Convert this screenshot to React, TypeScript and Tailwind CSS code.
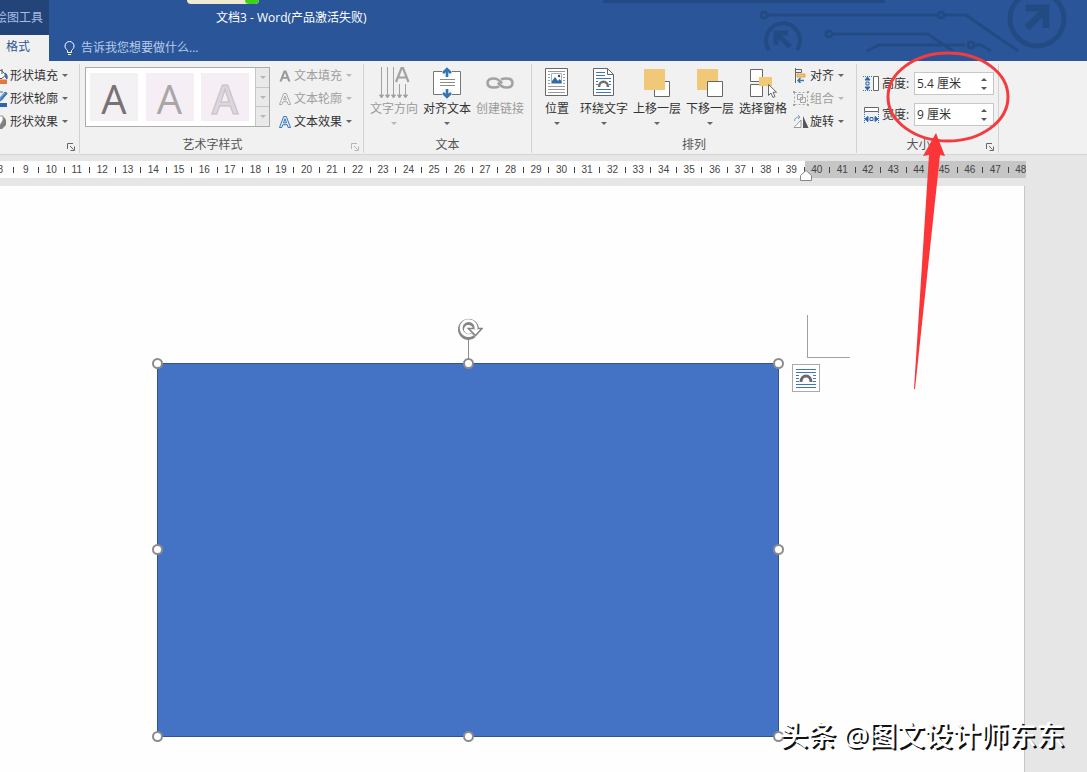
import React from 'react';
import clsx from 'clsx';

const RULER = Array.from({ length: 41 }, (_, i) => i + 8);

const Caret: React.FC<{ dim?: boolean }> = ({ dim }) => (
  <svg width="6" height="3" viewBox="0 0 6 3" className={clsx('shrink-0', dim ? 'fill-[#b8b8b8]' : 'fill-[#666]')}>
    <path d="M0 0h6L3 3z" />
  </svg>
);

const Launcher: React.FC<{ dim?: boolean; label: string }> = ({ dim, label }) => (
  <button aria-label={label} className={clsx('absolute bottom-0.5 right-1', dim ? 'text-[#b5b5b5]' : 'text-[#666]')}>
    <svg width="8" height="8" viewBox="0 0 8 8" fill="none" stroke="currentColor">
      <path d="M.5 6V.5H6M3 3l3.500 3.500M7.500 3.500v4h-4" />
    </svg>
  </button>
);

interface GroupProps {
  label: string;
  launcher?: 'on' | 'dim';
  className?: string;
  children: React.ReactNode;
}

const Group: React.FC<GroupProps> = ({ label, launcher, className, children }) => (
  <section className={clsx('relative flex h-[89px] shrink-0 flex-col border-r border-[#d2d2d2]', className)}>
    <div className="flex flex-1">{children}</div>
    <div className={clsx('h-4 text-center text-[#555]', launcher && 'pr-[18px]')}>{label}</div>
    {launcher && <Launcher dim={launcher === 'dim'} label="更多选项" />}
  </section>
);

interface ItemProps {
  icon: React.ReactNode;
  text: string;
  dim?: boolean;
  caret?: boolean;
  narrow?: boolean;
}

const SmallItem: React.FC<ItemProps> = ({ icon, text, dim }) => (
  <button className={clsx('flex h-[23px] items-center gap-px whitespace-nowrap', dim ? 'text-[#a0a0a0]' : 'text-[#333]')}>
    <span className="flex w-4 shrink-0 justify-center">{icon}</span>
    <span>{text}</span>
    <span className="ml-[3px]">
      <Caret dim={dim} />
    </span>
  </button>
);

const BigItem: React.FC<ItemProps> = ({ icon, text, dim, caret = true, narrow }) => (
  <button
    className={clsx(
      'flex flex-col items-center self-start whitespace-nowrap',
      narrow ? 'w-9' : 'w-12',
      dim ? 'text-[#9a9a9a]' : 'text-[#333]'
    )}
  >
    <span className="flex h-[37px] items-center justify-center">{icon}</span>
    <span>{text}</span>
    {caret && (
      <span className="mt-[5px]">
        <Caret dim={dim} />
      </span>
    )}
  </button>
);

const FillIcon = () => (
  <svg width="16" height="16" viewBox="0 0 16 16" fill="none">
    <path d="M3 6l5-4 5 5-5 4z" fill="#fff" stroke="#555" />
    <path d="M9 1v5" stroke="#555" />
    <path d="M12 5c2 1 2.500 3 2 6-1.500-1-2-3-2-6z" fill="#2e6ca8" stroke="#2e6ca8" />
    <path d="M0 11.500h14V16H0z" fill="#e8763a" />
  </svg>
);

const OutlineIcon = () => (
  <svg width="16" height="16" viewBox="0 0 16 16" fill="none">
    <path d="M1 1h9M5 11l1-3 6-7 2 1.500-6 7z" stroke="#3b78b8" />
    <path d="M6 9l7-8 1.500 1.500-6 7z" fill="#3b78b8" />
    <path d="M0 12h14v4H0z" fill="#2b64b5" />
  </svg>
);

const EffectIcon = () => (
  <svg width="16" height="16" viewBox="0 0 16 16">
    <path d="M5 3h6l2 3v5l-4 4H4z" fill="#808080" />
    <path d="M1 2h9v4l-4 7H1z" fill="#fff" stroke="#999" />
  </svg>
);

const GlyphA: React.FC<{ className: string }> = ({ className }) => (
  <svg width="14" height="14" viewBox="0 0 14 14" className={className}>
    <path d="M1.500 12.500L5.700 1.500h2.600l4.200 11h-2.300l-1-2.800H4.800l-1 2.800zM5.500 7.900h3L7 3.700z" />
  </svg>
);

const DirectionIcon = () => (
  <svg width="32" height="34" viewBox="0 0 32 34" fill="none" stroke="#a2a2a2">
    <path d="M3.500 1v30M9.500 1v30M15.500 1v30M21.500 18v13M27.500 18v13" />
    <path d="M1.500 29l2 3 2-3zM7.500 29l2 3 2-3zM13.500 29l2 3 2-3zM19.500 29l2 3 2-3zM25.500 29l2 3 2-3z" fill="#a2a2a2" />
    <path d="M18 16L23.500 2h1.500L30.500 16M20 11.500h8.500" strokeWidth="2.200" />
  </svg>
);

const AlignTextIcon = () => (
  <svg width="30" height="32" viewBox="0 0 30 32" fill="none">
    <path d="M1.500 4.500h27v23h-27z" fill="#fff" stroke="#777" />
    <path d="M10 0h10v9H10zM10 22h10v10H10z" fill="#f6f6f6" />
    <path d="M8 12.500h15M8 15.500h15M8 18.500h15" stroke="#8a8a8a" />
    <path d="M15 10V3M11 6l4-4 4 4M15 22v7M11 26l4 4 4-4" stroke="#3574b5" strokeWidth="2.600" />
  </svg>
);

const LinkIcon = () => (
  <svg width="28" height="14" viewBox="0 0 28 14" fill="none" stroke="#a2a2a2" strokeWidth="2.600">
    <path d="M13 10.500c-1.500.800-3 1-5.500 1C4 11.500 1.500 10 1.500 7S4 2.500 7.500 2.500c4 0 6.500 2 8.500 5" />
    <path d="M15 3.500c1.500-.800 3-1 5.500-1 3.500 0 6 1.500 6 4.500s-2.500 4.500-6 4.500c-4 0-6.500-2-8.500-5" />
  </svg>
);

const PositionIcon = () => (
  <svg width="24" height="29" viewBox="0 0 24 29" fill="none">
    <path d="M.5.500h22v27H.500z" fill="#fff" stroke="#666" />
    <path d="M3 3.500h17M3 6.500h2M18 6.500h2M3 9.500h2M18 9.500h2M3 12.500h2M18 12.500h2M3 15.500h2M18 15.500h2M3 18.500h17M3 21.500h17M3 24.500h17" stroke="#9a9a9a" />
    <path d="M6.500 5.500h10v10h-10z" fill="#fff" stroke="#9fb5cc" />
    <path d="M7 15v-2l3-4 3 4 1.500-2 2 2v2z" fill="#2f6da8" />
    <circle cx="14" cy="8" r="1.200" fill="#444" />
  </svg>
);

const WrapIcon = () => (
  <svg width="22" height="29" viewBox="0 0 22 29" fill="none">
    <path d="M.5.500h14l6 6v21H.500z" fill="#fff" stroke="#666" />
    <path d="M14.500.500v6h6" stroke="#666" />
    <path d="M3 4.500h9M3 7.500h9M3 10.500h15M3 13.500h2M16 13.500h2M3 16.500h2M16 16.500h2M3 21.500h15M3 24.500h15" stroke="#3f77b6" />
    <path d="M6 19c0-7 9-7 9 0" stroke="#707070" strokeWidth="2.600" />
  </svg>
);

const ForwardIcon = () => (
  <svg width="28" height="30" viewBox="0 0 28 30">
    <path d="M11.500 13.500h15v15h-15z" fill="#fff" stroke="#666" />
    <path d="M1 1h21v21H1z" fill="#f0c878" />
  </svg>
);

const BackwardIcon = () => (
  <svg width="28" height="30" viewBox="0 0 28 30">
    <path d="M1 1h21v21H1z" fill="#f0c878" />
    <path d="M11.500 13.500h15v15h-15z" fill="#fff" stroke="#666" />
  </svg>
);

const PaneIcon = () => (
  <svg width="28" height="30" viewBox="0 0 28 30">
    <path d="M1.500 1.500h12v12h-12zM1.500 16.500h12v12h-12z" fill="#fff" stroke="#666" />
    <path d="M10 9h13v9H10z" fill="#f0c878" />
    <path d="M19.500 16.500v11l2.500-2.500 2 4.500 2-1-2-4.300h3.500z" fill="#fff" stroke="#666" />
  </svg>
);

const AlignIcon = () => (
  <svg width="14" height="15" viewBox="0 0 14 15" fill="none">
    <path d="M1.500 0v15M1.500 1.500h6v3h-6" stroke="#666" />
    <path d="M3 6h8v3H3z" fill="#f3c376" stroke="#dfa64f" />
    <path d="M4 12.500h6M6.500 10L4 12.500 6.500 15" stroke="#3574b5" strokeWidth="1.500" />
  </svg>
);

const CombineIcon = () => (
  <svg width="16" height="15" viewBox="0 0 16 15" fill="none" stroke="#a5a5a5">
    <path d="M1.500 1.500h13v12h-13z" strokeDasharray="2 2" />
    <path d="M4.500 3.500h5v5h-5zM7.500 6.500h5v5h-5z" />
    <path d="M0 0h2v2H0zM14 0h2v2h-2zM0 13h2v2H0zM14 13h2v2h-2z" fill="#a5a5a5" stroke="none" />
  </svg>
);

const RotateIcon = () => (
  <svg width="16" height="14" viewBox="0 0 16 14" fill="none">
    <path d="M1 12.500h7V5z" fill="#fff" stroke="#999" />
    <path d="M10 1l5.500 12H10z" fill="#555" />
    <path d="M1.500 6c0-3 2-4 5-4M5 0l2 2-2 2" stroke="#7c9cc4" />
  </svg>
);

const HeightIcon = () => (
  <svg width="17" height="17" viewBox="0 0 17 17" fill="none">
    <path d="M10.500 1.500h5v14h-5z" fill="#fff" stroke="#666" />
    <path d="M0 1.500h10M0 15.500h10" stroke="#3574b5" strokeDasharray="1 1" />
    <path d="M4.500 2L2 5h5zM4.500 15L2 12h5z" fill="#2b64a8" stroke="#2b64a8" />
    <path d="M3 7h3v3H3z" stroke="#2b64a8" />
  </svg>
);

const WidthIcon = () => (
  <svg width="17" height="17" viewBox="0 0 17 17" fill="none">
    <path d="M1.500 1.500h14v4h-14z" fill="#fff" stroke="#666" />
    <path d="M1.500 6v11M15.500 6v11" stroke="#3574b5" strokeDasharray="1 1" />
    <path d="M2 13l3-2.500v5zM15 13l-3-2.500v5z" fill="#2b64a8" stroke="#2b64a8" />
    <path d="M7 11.500h3v3H7z" stroke="#2b64a8" />
  </svg>
);

const LayoutIcon = () => (
  <svg width="20" height="20" viewBox="0 0 20 20" fill="none">
    <path d="M0 1.500h20M0 4.500h20M0 7.500h3M17 7.500h3M0 10.500h3M17 10.500h3M0 13.500h3M17 13.500h3M0 16.500h20M0 19.500h20" stroke="#3f77b6" />
    <path d="M5 14c0-8 10-8 10 0" stroke="#6a6a6a" strokeWidth="3" />
  </svg>
);

const Circuit = () => (
  <svg width="340" height="61" viewBox="0 0 340 61" fill="none" stroke="#234b83" strokeWidth="3" className="absolute right-0 top-0">
    <circle cx="17" cy="15" r="3" />
    <path d="M20 15h171M197 15h22L271 51" />
    <circle cx="194" cy="15" r="3" />
    <circle cx="82" cy="34" r="3" />
    <path d="M85 34h96L206 51M120 51l12-6h86M228 45h6L244 51" />
    <circle cx="224" cy="45" r="3" />
    <path d="M22 50a17 17 0 1 1 28 0" strokeWidth="4" />
    <path d="M29 45V33h12M30 34l13 13" strokeWidth="5" />
    <circle cx="290" cy="19" r="27" strokeWidth="5" />
    <path d="M279 8h20v20M299 9L280 28" strokeWidth="7" />
  </svg>
);

interface SizeFieldProps {
  id: string;
  label: string;
  value: string;
  icon: React.ReactNode;
}

const SizeField: React.FC<SizeFieldProps> = ({ id, label, value, icon }) => (
  <div className="flex items-center">
    {icon}
    <label htmlFor={id} className="ml-0.5 w-8 whitespace-nowrap text-[#333]">
      {label}
    </label>
    <div className="flex h-[23px] w-20 items-center border border-[#c6c6c6] bg-white">
      <input id={id} defaultValue={value} className="w-[66px] pl-0.5 text-[#333] outline-none" />
      <div className="flex flex-col gap-1.5">
        <button aria-label={`${label} +`}>
          <svg width="6" height="3" viewBox="0 0 6 3" className="block fill-[#555]">
            <path d="M0 3h6L3 0z" />
          </svg>
        </button>
        <button aria-label={`${label} -`}>
          <svg width="6" height="3" viewBox="0 0 6 3" className="block fill-[#555]">
            <path d="M0 0h6L3 3z" />
          </svg>
        </button>
      </div>
    </div>
  </div>
);

const TitleBar = () => (
  <header className="relative flex h-[61px] overflow-hidden bg-[#2a5699] text-white">
    <Circuit />
    <div className="absolute left-[187px] top-0 flex h-1 w-[72px] justify-end overflow-hidden rounded-b-sm bg-[#efead2]">
      <span className="h-1 w-3.5 rounded-b-full bg-[#3fd01c]" />
    </div>
    <div className="absolute left-[603px] top-0 h-[3px] w-[282px] bg-[#234a82]" />
    <div className="flex w-[49px] flex-col">
      <div className="flex h-[35px] items-center justify-end overflow-hidden whitespace-nowrap bg-[#224479] pr-1.5 text-[#a9bde0]">
        绘图工具
      </div>
      <button className="flex-1 bg-[#f1f1f1] pb-0.5 pr-[19px] text-right text-[#2a5699]">格式</button>
    </div>
    <div className="relative flex flex-1 flex-col">
      <h1 className="ml-[167px] flex h-[35px] items-center">文档3 - Word(产品激活失败)</h1>
      <button className="ml-[15px] flex flex-1 items-center gap-1.5 self-start text-[#b9cbe8]">
        <svg width="11" height="15" viewBox="0 0 11 15" fill="none" stroke="#fff">
          <path d="M3.500 11.500V9.500C2 8 1 7 1 5a4.500 4.500 0 0 1 9 0c0 2-1 3-2.500 4.500v2zM4 13.500h3" />
        </svg>
        告诉我您想要做什么...
      </button>
    </div>
  </header>
);

const Ribbon = () => (
  <nav className="flex h-[94px] border-b border-[#d5d5d5] bg-[#f1f1f1] pt-[3px]">
    <Group label="" launcher="on" className="w-20 overflow-hidden">
      <div className="-ml-[7px]">
        <SmallItem icon={<FillIcon />} text="形状填充" />
        <SmallItem icon={<OutlineIcon />} text="形状轮廓" />
        <SmallItem icon={<EffectIcon />} text="形状效果" />
      </div>
    </Group>

    <Group label="艺术字样式" launcher="dim" className="w-[284px]">
      <div className="ml-[5px] mt-[3px] flex h-[60px] w-[185px] border border-[#ababab] bg-white">
        <div className="flex flex-1 items-center justify-between pl-1 pr-1.5 text-[40px] leading-[52px]">
          <button className="size-12 bg-[#f3f1f3] font-medium text-[#787275]">A</button>
          <button className="size-12 bg-[#f5eff5] font-medium text-[#aaa5a9]">A</button>
          <button className="size-12 bg-[#f5eff5] font-semibold text-[#ded6de] [-webkit-text-stroke:1px_#c5bfc5]">A</button>
        </div>
        <div className="flex w-3.5 flex-col divide-y divide-[#c6c6c6] border-l border-[#c6c6c6] bg-[#e9e9e9]">
          <button aria-label="上一行" className="flex flex-1 items-center justify-center"><Caret dim /></button>
          <button aria-label="下一行" className="flex flex-1 items-center justify-center"><Caret dim /></button>
          <button aria-label="其他" className="flex flex-1 items-center justify-center"><Caret dim /></button>
        </div>
      </div>
      <div className="ml-[7px]">
        <SmallItem icon={<GlyphA className="fill-[#9a9a9a]" />} text="文本填充" dim />
        <SmallItem icon={<GlyphA className="fill-white stroke-[#a5a5a5]" />} text="文本轮廓" dim />
        <SmallItem icon={<GlyphA className="fill-[#e8f2fc] stroke-[#3574b5]" />} text="文本效果" />
      </div>
    </Group>

    <Group label="文本" className="w-[168px]">
      <div className="flex gap-[5px] pl-1.5">
        <BigItem icon={<DirectionIcon />} text="文字方向" dim />
        <BigItem icon={<AlignTextIcon />} text="对齐文本" />
        <BigItem icon={<LinkIcon />} text="创建链接" dim caret={false} />
      </div>
    </Group>

    <Group label="排列" className="w-[325px]">
      <div className="flex gap-[5px] pl-[7px]">
        <BigItem icon={<PositionIcon />} text="位置" narrow />
        <BigItem icon={<WrapIcon />} text="环绕文字" />
        <BigItem icon={<ForwardIcon />} text="上移一层" />
        <BigItem icon={<BackwardIcon />} text="下移一层" />
        <BigItem icon={<PaneIcon />} text="选择窗格" caret={false} />
        <div className="pl-px">
          <SmallItem icon={<AlignIcon />} text="对齐" />
          <SmallItem icon={<CombineIcon />} text="组合" dim />
          <SmallItem icon={<RotateIcon />} text="旋转" />
        </div>
      </div>
    </Group>

    <Group label="大小" launcher="on" className="w-[142px]">
      <div className="flex flex-col gap-2 pl-1.5 pt-2">
        <SizeField id="height" label="高度:" value="5.4 厘米" icon={<HeightIcon />} />
        <SizeField id="width" label="宽度:" value="9 厘米" icon={<WidthIcon />} />
      </div>
    </Group>
  </nav>
);

const Ruler = () => (
  <div className="relative h-[31px] pt-1.5">
    <div className="w-[1026px] overflow-hidden">
      <div className="-ml-3 flex w-[1046px] font-['Liberation_Sans'] text-[10px] leading-4 text-[#444]">
        {RULER.map((n) => (
          <div key={n} className={clsx('flex h-[17px] flex-1 items-center', n < 40 ? 'bg-white' : 'bg-[#c6c6c6]')}>
            <span className="flex-1 text-center">{n}</span>
            <span className="h-1.5 w-px bg-[#444]" />
          </div>
        ))}
      </div>
    </div>
    <svg width="12" height="11" viewBox="0 0 12 11" className="absolute left-[800px] top-[15px]">
      <path d="M.500 10.500v-5L6 .500l5.500 5v5z" fill="#fff" stroke="#888" />
    </svg>
  </div>
);

const Handle: React.FC<{ className: string }> = ({ className }) => (
  <span className={clsx('absolute size-[11px] rounded-full border-2 border-[#8c8c8c] bg-white', className)} />
);

const Canvas = () => (
  <main className="relative flex min-h-[586px] flex-1 overflow-hidden">
    <div className="flex-1 border-r border-[#c6c6c6] bg-[#fefefe]" />
    <div className="w-[62px]" />
    <div className="absolute left-[157px] top-[177px] h-[374px] w-[622px] border border-[#31538f] bg-[#4472c4]">
      <span className="absolute left-[310px] top-[-24px] h-6 w-px bg-[#8c8c8c]" />
      {/* rotation handle: white ring with grey edges and an arrow head */}
      <svg width="26" height="24" viewBox="0 0 26 24" fill="none" className="absolute left-[299px] top-[-46px]">
        <path d="M16.500 17a7.500 7.500 0 1 1 2.500-6" stroke="#858585" strokeWidth="6" />
        <path d="M11.500 10.500h13.500l-6.500 7z" fill="#fff" stroke="#858585" strokeWidth="1.600" />
        <path d="M15.500 16.500a7.500 7.500 0 1 1 3.500-5" stroke="#fff" strokeWidth="2.800" />
      </svg>
      <Handle className="left-[-6px] top-[-6px]" />
      <Handle className="left-[305px] top-[-6px]" />
      <Handle className="left-[615px] top-[-6px]" />
      <Handle className="left-[-6px] top-[180px]" />
      <Handle className="left-[615px] top-[180px]" />
      <Handle className="left-[-6px] top-[367px]" />
      <Handle className="left-[305px] top-[367px]" />
      <Handle className="left-[615px] top-[367px]" />
    </div>
    <div className="absolute left-[807px] top-[129px] h-[43px] w-[43px] border-b border-l border-[#a0a0a0]" />
    <button
      aria-label="布局选项"
      className="absolute left-[792px] top-[178px] flex size-7 items-center justify-center border border-[#ababab] bg-white"
    >
      <LayoutIcon />
    </button>
    <p className="absolute left-[780px] top-[529px] whitespace-nowrap text-[28px] font-medium leading-10 text-white [text-shadow:2px_2px_0_#111]">
      头条 @图文设计师东东
    </p>
  </main>
);

export default function App() {
  return (
    <div className="relative flex min-h-screen flex-col overflow-hidden bg-[#e6e6e6] font-['Open_Sans','Noto_Sans_CJK_SC',sans-serif] text-xs">
      <TitleBar />
      <Ribbon />
      <Ruler />
      <Canvas />
      <svg width="124" height="340" viewBox="0 0 124 340" className="pointer-events-none absolute left-[886px] top-[51px]">
        <ellipse cx="62" cy="46" rx="60" ry="44" fill="none" stroke="#f23c40" strokeWidth="3" />
        <path d="M50 82l9 23-5-1L29 338h-1L43 104l-6 1z" fill="#fb3538" />
      </svg>
    </div>
  );
}
